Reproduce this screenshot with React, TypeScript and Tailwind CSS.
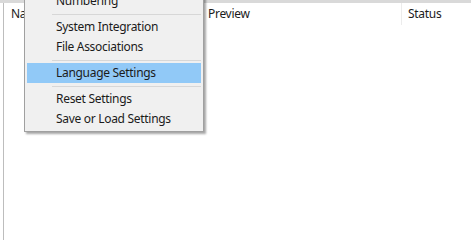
import React from "react";

const menuItems: (string | null)[] = [
    "Numbering",
    null,
    "System Integration",
    "File Associations",
    null,
    "Language Settings",
    null,
    "Reset Settings",
    "Save or Load Settings",
];

export default function App() {
    return (
        <div
            className="relative w-[471px] h-[240px] overflow-hidden bg-white text-[12px] tracking-[-0.3px] text-[#1b1b1b]"
            style={{ fontFamily: '"Noto Sans", "Liberation Sans", sans-serif' }}
        >
            {/* window top edge */}
            <div className="h-[3px] bg-[#d9d9d9]" />

            {/* list view */}
            <div className="flex h-[237px]">
                <div className="w-[3px]" />
                <div className="flex-1 border-l border-[#bdbdbd]">
                    <div className="flex h-[22px] items-center">
                        <div className="w-[196px] pl-[7px]">Name</div>
                        <div className="w-[201px] pl-[8px]">Preview</div>
                        <div className="h-full border-l border-[#ececec] pl-[6px] flex items-center">Status</div>
                    </div>
                </div>
            </div>

            {/* context menu */}
            <div className="absolute left-[24px] top-[-12px] w-[180px] border border-[#a0a0a0] bg-[#f0f0f0] p-[2px] shadow-[2px_2px_2px_rgba(0,0,0,0.35)]">
                {menuItems.map((item, i) =>
                    item === null ? (
                        <div key={i} className="flex h-[6px] items-center pl-[25px]">
                            <div className="h-px w-full bg-[#d7d7d7]" />
                        </div>
                    ) : (
                        <div
                            key={i}
                            className={`flex h-[20px] items-center pl-[29px] ${
                                item === "Language Settings" ? "bg-[#91c9f7]" : ""
                            }`}
                        >
                            {item}
                        </div>
                    )
                )}
            </div>
        </div>
    );
}
